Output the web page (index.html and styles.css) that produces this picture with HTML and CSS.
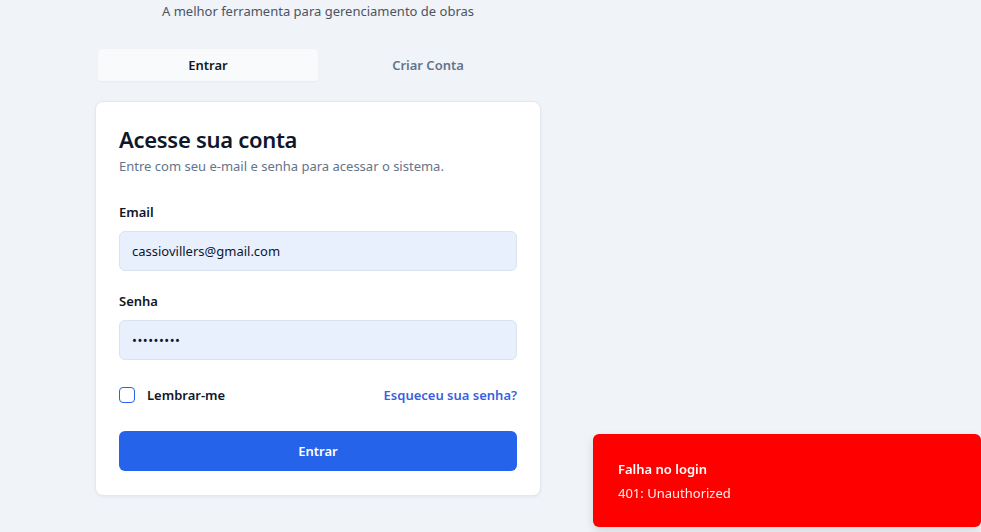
FILE: index.html
```html
<!DOCTYPE html>
<html lang="pt-BR">
<head>
<meta charset="utf-8">
<title>Login</title>
<link rel="stylesheet" href="styles.css">
</head>
<body>
<main class="page">
  <div class="column">
    <p class="tagline">A melhor ferramenta para gerenciamento de obras</p>
    <div class="tabs">
      <button class="tab active">Entrar</button>
      <button class="tab">Criar Conta</button>
    </div>
    <section class="card">
      <h1 class="title">Acesse sua conta</h1>
      <p class="subtitle">Entre com seu e-mail e senha para acessar o sistema.</p>
      <form class="form">
        <div class="field">
          <label class="label" for="email">Email</label>
          <input class="input" id="email" type="email" value="cassiovillers@gmail.com">
        </div>
        <div class="field">
          <label class="label" for="senha">Senha</label>
          <input class="input pass" id="senha" type="password" value="123456789">
        </div>
        <div class="row">
          <label class="remember"><span class="checkbox"></span>Lembrar-me</label>
          <a class="forgot" href="#">Esqueceu sua senha?</a>
        </div>
        <button type="button" class="submit">Entrar</button>
      </form>
    </section>
  </div>
</main>
<div class="toast">
  <div class="toast-title">Falha no login</div>
  <div class="toast-desc">401: Unauthorized</div>
</div>
</body>
</html>
```
FILE: styles.css
```css
* { box-sizing: border-box; }
html, body { margin: 0; padding: 0; }
body {
  background: #f0f3f8;
  font-family: "Noto Sans", "Open Sans", sans-serif;
  color: #0f172a;
  height: 532px;
  overflow: hidden;
}
.page {
  padding-left: 95px;
}
.column {
  width: 446px;
  display: flex;
  flex-direction: column;
}
.tagline {
  margin: 0;
  padding-top: 1px;
  text-align: center;
  font-size: 13px;
  line-height: 20px;
  color: #4b5563;
}
.tabs {
  margin: 26px 1px 0;
  height: 36px;
  padding: 2px;
  display: grid;
  grid-template-columns: 1fr 1fr;
  background: #f0f3f8;
  border-radius: 6px;
}
.tab {
  border: 0;
  background: transparent;
  font-family: inherit;
  font-size: 13px;
  font-weight: 600;
  color: #64748b;
  border-radius: 4px;
  cursor: pointer;
}
.tab.active {
  background: #f8fafc;
  color: #0f172a;
  box-shadow: 0 1px 2px rgba(0,0,0,0.04);
}
.card {
  margin-top: 18px;
  background: #fff;
  border: 1px solid #e2e8f0;
  border-radius: 8px;
  box-shadow: 0 1px 3px rgba(15,23,42,0.06);
  padding: 22px 23px 24px;
}
.title {
  margin: 0;
  font-size: 22px;
  line-height: 30px;
  font-weight: 600;
  letter-spacing: -0.3px;
  color: #0f172a;
}
.subtitle {
  margin: 2px 0 0;
  font-size: 13px;
  line-height: 20px;
  color: #64748b;
}
.form {
  margin-top: 26px;
  display: flex;
  flex-direction: column;
}
.field {
  display: flex;
  flex-direction: column;
  margin-bottom: 20px;
}
.label {
  font-size: 13px;
  line-height: 20px;
  font-weight: 600;
  color: #0f172a;
  margin-bottom: 9px;
}
.field + .field .label {
  margin-bottom: 9px;
}
.input {
  height: 40px;
  border: 1px solid #dbe3ee;
  border-radius: 6px;
  background: #e8f0fe;
  padding: 0 12px;
  font-family: inherit;
  font-size: 13px;
  color: #0f172a;
  outline: none;
}
.input.pass {
  font-size: 13px;
  letter-spacing: 0.5px;
}
.row {
  margin-top: 3px;
  display: flex;
  justify-content: space-between;
  align-items: center;
  height: 24px;
}
.remember {
  display: flex;
  align-items: center;
  gap: 12px;
  font-size: 13px;
  font-weight: 600;
  color: #0f172a;
}
.checkbox {
  width: 16px;
  height: 16px;
  border: 1.5px solid #2563eb;
  border-radius: 4px;
  background: #fff;
}
.forgot {
  font-size: 13px;
  font-weight: 600;
  color: #3b5fe0;
  text-decoration: none;
}
.submit {
  margin-top: 24px;
  height: 40px;
  border: 0;
  border-radius: 6px;
  background: #2563eb;
  color: #fff;
  font-family: inherit;
  font-size: 13px;
  font-weight: 600;
}
.toast {
  position: fixed;
  left: 593px;
  right: 0;
  top: 434px;
  height: 93px;
  background: #ff0000;
  border-radius: 6px;
  box-shadow: 0 4px 10px rgba(0,0,0,0.12);
  padding: 25px 25px;
  color: #fff;
}
.toast-title {
  font-size: 13px;
  font-weight: 600;
  line-height: 20px;
}
.toast-desc {
  margin-top: 4px;
  font-size: 13px;
  line-height: 20px;
  opacity: 0.92;
}
```
